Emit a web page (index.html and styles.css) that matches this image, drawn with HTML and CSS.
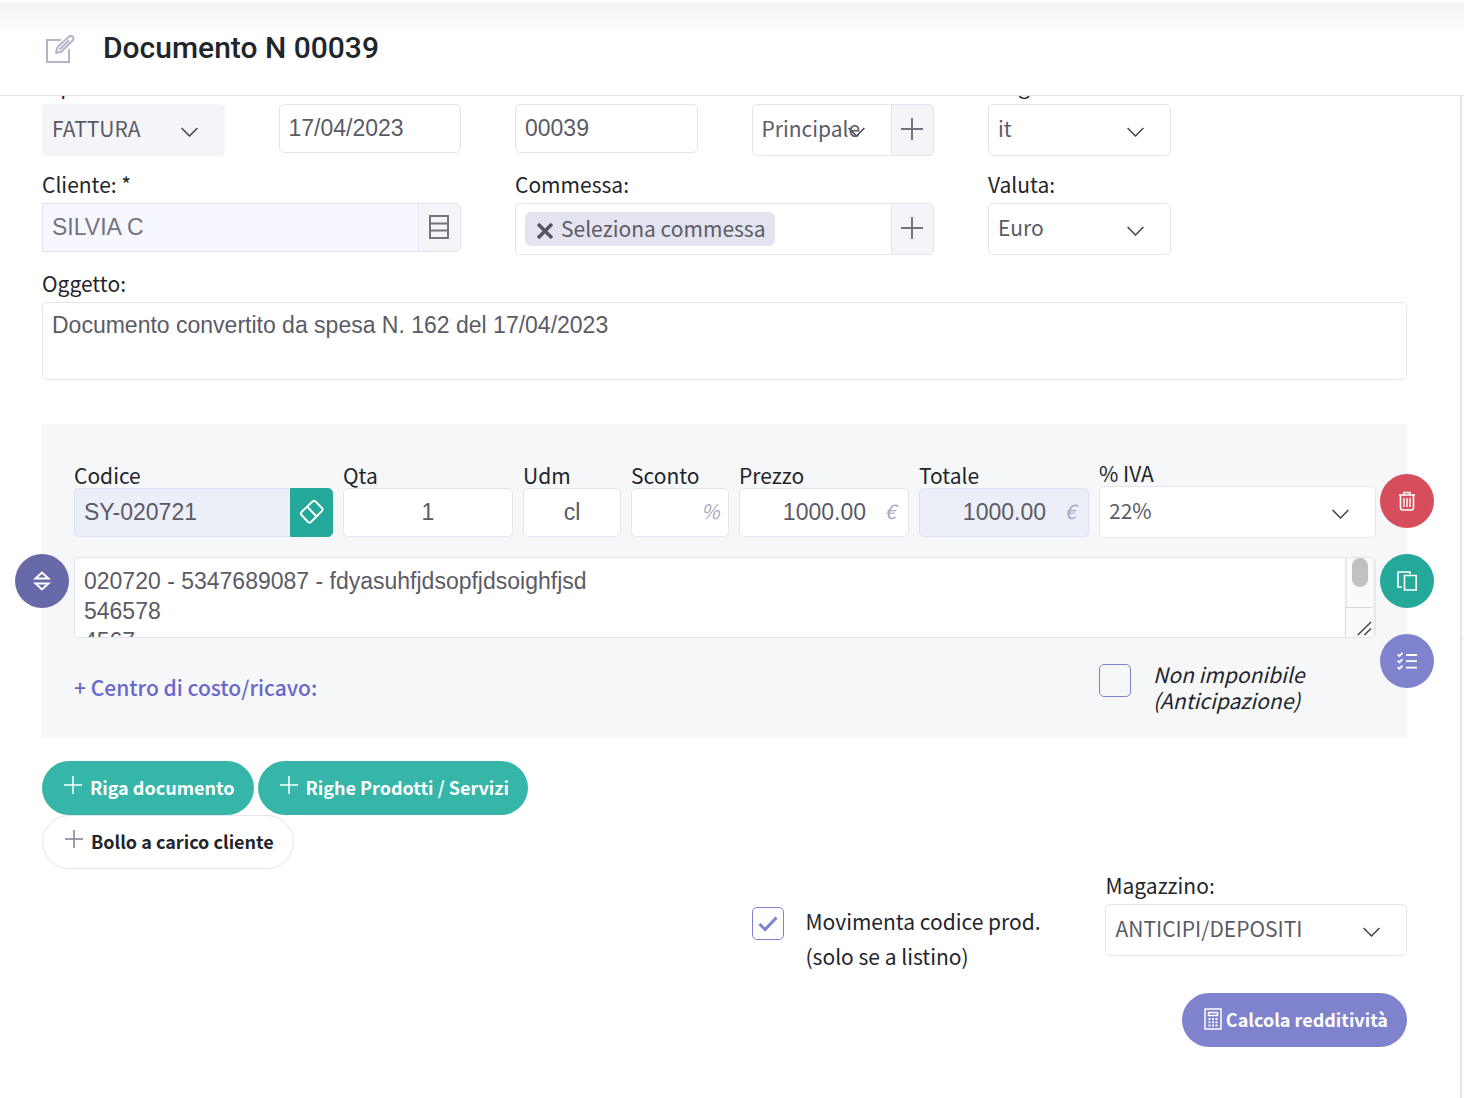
FILE: index.html
```html
<!DOCTYPE html>
<html lang="it">
<head>
<meta charset="utf-8">
<meta name="viewport" content="width=device-width, initial-scale=1">
<title>Documento N 00039</title>
<link rel="stylesheet" href="styles.css">
</head>
<body>
<header class="page-header">
  <svg class="page-header-icon" width="30" height="30" viewBox="0 0 30 30" fill="none" stroke="#b4b4cb" stroke-width="2" aria-hidden="true"><path d="M16 5H2v22h22V14"/><path d="M11 18l1.500-6L24 1.800a2.600 2.600 0 0 1 3.700 3.700L16.500 16.500zM24 5.500L14.500 14.500" stroke-linejoin="round"/></svg>
  <h1 class="page-title">Documento N 00039</h1>
</header>
<div class="page-body">
<main class="content">
  <form class="document-form">
    <div class="field">
      <label class="label" for="tipo">Tipo:</label>
      <select class="control select select-muted" id="tipo"><option>FATTURA</option></select>
    </div>
    <div class="field">
      <label class="label" for="data">Data:</label>
      <input class="control" id="data" type="text" value="17/04/2023">
    </div>
    <div class="field">
      <label class="label" for="numero">Numero:</label>
      <input class="control" id="numero" type="text" value="00039">
    </div>
    <div class="field">
      <label class="label" for="sezionale">Sezionale:</label>
      <div class="group">
        <select class="control select" id="sezionale"><option>Principale</option></select>
        <button class="addon" type="button" aria-label="Aggiungi sezionale"><svg width="22" height="22" viewBox="0 0 22 22" stroke="#74747f" stroke-width="2"><path d="M11 0v22M0 11h22"/></svg></button>
      </div>
    </div>
    <div class="field">
      <label class="label" for="lingua">Lingua:</label>
      <select class="control select" id="lingua"><option>it</option></select>
    </div>

    <div class="field field-wide row-start">
      <label class="label" for="cliente">Cliente: *</label>
      <div class="group">
        <input class="control control-client" id="cliente" type="text" value="SILVIA C" readonly>
        <button class="addon" type="button" aria-label="Elenco clienti"><svg width="20" height="24" viewBox="0 0 20 24" fill="none" stroke="#74747f" stroke-width="2"><path d="M1 1h18v22H1zM1 8.500h18M1 15.500h18"/></svg></button>
      </div>
    </div>
    <div class="field field-wide">
      <span class="label" id="commessa-label">Commessa:</span>
      <div class="group">
        <div class="control tags" role="group" aria-labelledby="commessa-label">
          <span class="tag"><button class="tag-remove" type="button" aria-label="Rimuovi"><svg width="16" height="16" viewBox="0 0 16 16" stroke="#55555f" stroke-width="3.500"><path d="M1 1l14 14M15 1L1 15"/></svg></button><span class="tag-text">Seleziona commessa</span></span>
        </div>
        <button class="addon" type="button" aria-label="Aggiungi commessa"><svg width="22" height="22" viewBox="0 0 22 22" stroke="#74747f" stroke-width="2"><path d="M11 0v22M0 11h22"/></svg></button>
      </div>
    </div>
    <div class="field">
      <label class="label" for="valuta">Valuta:</label>
      <select class="control select" id="valuta"><option>Euro</option></select>
    </div>

    <div class="field field-full">
      <label class="label" for="oggetto">Oggetto:</label>
      <textarea class="control subject" id="oggetto">Documento convertito da spesa N. 162 del 17/04/2023</textarea>
    </div>

    <section class="line-item">
      <div class="line-fields">
        <div class="field">
          <label class="line-label" for="codice">Codice</label>
          <div class="group">
            <input class="control control-tinted" id="codice" type="text" value="SY-020721" readonly>
            <button class="addon addon-green" type="button" aria-label="Cancella codice"><svg width="26" height="26" viewBox="0 0 26 26" fill="none" stroke="#fff" stroke-width="2" stroke-linejoin="round"><path d="M2.500 13L13.500 2.500q1.500-1.200 3 0l6.500 6.500q1.200 1.500 0 3L12 23q-1.500 1.200-3 0L2.500 16q-1.200-1.500 0-3zM9 8.500l8.500 9"/></svg></button>
          </div>
        </div>
        <div class="field">
          <label class="line-label" for="qta">Qta</label>
          <input class="control centered" id="qta" type="text" value="1">
        </div>
        <div class="field">
          <label class="line-label" for="udm">Udm</label>
          <input class="control centered" id="udm" type="text" value="cl">
        </div>
        <div class="field">
          <label class="line-label" for="sconto">Sconto</label>
          <div class="control amount"><input class="amount-input" id="sconto" type="text"><span class="unit">%</span></div>
        </div>
        <div class="field">
          <label class="line-label" for="prezzo">Prezzo</label>
          <div class="control amount"><input class="amount-input" id="prezzo" type="text" value="1000.00"><span class="unit">€</span></div>
        </div>
        <div class="field">
          <label class="line-label" for="totale">Totale</label>
          <div class="control control-tinted amount"><input class="amount-input" id="totale" type="text" value="1000.00" readonly><span class="unit">€</span></div>
        </div>
        <div class="field">
          <label class="line-label" for="iva">% IVA</label>
          <select class="control select" id="iva"><option>22%</option></select>
        </div>
      </div>
      <div class="control description">
        <textarea class="description-text" aria-label="Descrizione">020720 - 5347689087 - fdyasuhfjdsopfjdsoighfjsd
546578
4567

</textarea>
        <div class="rail" aria-hidden="true">
          <div class="rail-track"><div class="rail-thumb"></div></div>
          <svg class="rail-grip" width="20" height="18" viewBox="0 0 20 18" stroke="#444" stroke-width="1.500"><path d="M4 16L18 2M11 16l7-7"/></svg>
        </div>
      </div>
      <div class="line-footer">
        <a class="cost-link" href="#">+ Centro di costo/ricavo:</a>
        <div class="check-row">
          <input class="checkbox" id="non-imponibile" type="checkbox">
          <label class="exempt-label" for="non-imponibile">Non imponibile<br>(Anticipazione)</label>
        </div>
      </div>
      <button class="round round-move" type="button" aria-label="Sposta riga"><svg width="18" height="20" viewBox="0 0 18 20" fill="none" stroke="#fff" stroke-width="2"><path d="M2.500 7.500h13L9 1.500zM2.500 12.500h13L9 18.500z"/></svg></button>
      <div class="line-actions">
        <button class="round round-red" type="button" aria-label="Elimina riga"><svg width="18" height="20" viewBox="0 0 18 20" fill="none" stroke="#fff" stroke-width="1.600"><path d="M1 4h16M2.500 4v12.500q0 2.500 2.500 2.500h8q2.500 0 2.500-2.500V4M6 4V1.500h6V4"/><path d="M6 7v9M9 7v9M12 7v9" stroke-width="1.400"/></svg></button>
        <button class="round round-green" type="button" aria-label="Duplica riga"><svg width="22" height="20" viewBox="0 0 22 20" fill="none" stroke="#fff" stroke-width="1.600"><path d="M14 3V1H2v15h4M8.500 4.500h11.700v14.500H8.500z"/></svg></button>
        <button class="round round-violet" type="button" aria-label="Dettagli riga"><svg width="20" height="18" viewBox="0 0 20 18" fill="none" stroke="#fff" stroke-width="1.800"><path d="M9 3h11M9 9.200h11M9 15.700h11"/><path d="M.6 2.500L2.500 4 5.500.8M.6 8.800l1.900 1.500 3-3.200M.6 15.300l1.900 1.500 3-3.200"/></svg></button>
      </div>
    </section>

    <div class="add-buttons">
      <button class="pill pill-green" type="button"><svg class="pill-plus" width="18" height="18" viewBox="0 0 18 18" stroke="currentColor" stroke-width="1.500"><path d="M9 0v18M0 9h18"/></svg>Riga documento</button>
      <button class="pill pill-green" type="button"><svg class="pill-plus" width="18" height="18" viewBox="0 0 18 18" stroke="currentColor" stroke-width="1.500"><path d="M9 0v18M0 9h18"/></svg>Righe Prodotti / Servizi</button>
      <button class="pill pill-outline" type="button"><svg class="pill-plus" width="18" height="18" viewBox="0 0 18 18" stroke="#7f7f8e" stroke-width="1.500"><path d="M9 0v18M0 9h18"/></svg>Bollo a carico cliente</button>
    </div>

    <div class="stock">
      <div class="check-row stock-check">
        <input class="checkbox" id="movimenta" type="checkbox" checked>
        <label class="stock-label" for="movimenta">Movimenta codice prod.<br>(solo se a listino)</label>
      </div>
      <div class="field">
        <label class="label" for="magazzino">Magazzino:</label>
        <select class="control select" id="magazzino"><option>ANTICIPI/DEPOSITI</option></select>
      </div>
    </div>
    <button class="pill pill-violet" type="button"><svg width="18" height="22" viewBox="0 0 18 22" fill="none" stroke="currentColor" stroke-width="1.500"><path d="M1 1h16v20H1zM4.500 4.500h9v3h-9z"/><path d="M4.500 11h9M4.500 14.200h9M4.500 17.400h9" stroke-width="2" stroke-dasharray="2 1.500"/></svg>Calcola redditività</button>
  </form>
</main>
<aside class="side-panel"><div class="side-panel-head"></div></aside>
</div>
</body>
</html>
```
FILE: styles.css
```css
* { box-sizing: border-box; }

body {
  margin: 0;
  height: 100vh;
  display: flex;
  flex-direction: column;
  overflow: hidden;
  background: #fff;
  color: #1f262b;
  font: 21px/30px "Noto Sans CJK SC", "Noto Sans", sans-serif;
}

button, input, select, textarea { margin: 0; font: inherit; color: inherit; }
button { cursor: pointer; padding: 0; border: 0; }
svg { display: block; flex: none; }

/* Header */
.page-header {
  flex: none;
  height: 96px;
  display: flex;
  align-items: center;
  gap: 28px;
  padding: 2px 45px 0;
  border-top: 2px solid #fff;
  border-bottom: 1px solid #e4e4f1;
  background: linear-gradient(#f3f3f3, #fff 34px);
}
.page-title {
  margin: 0;
  font: 500 30px/40px Roboto, sans-serif;
  padding-bottom: 4px;
}

/* Scrolling body */
.page-body { flex: 1; min-height: 0; display: flex; }
.content {
  flex: 1;
  overflow: hidden;
  padding: 0 53px 0 42px;
  border-right: 2px solid #e4e4f1;
}
.side-panel { width: 2px; }
.side-panel-head { height: 543px; border-bottom: 1px solid #e4e4f1; }

.document-form {
  display: grid;
  grid-template-columns: repeat(6, 1fr);
  gap: 13px 54px;
  margin-top: -26px;
}
.field { min-width: 0; display: flex; flex-direction: column; }
.field-wide { grid-column: span 2; }
.row-start { grid-column: 1 / span 2; }
.field-full { grid-column: 1 / -1; }
.label { line-height: 30px; margin-bottom: 4px; }
.line-label { line-height: 26px; }

.control {
  width: 100%;
  min-width: 0;
  height: 49px;
  padding: 0 9px;
  border: 1px solid #e4e4f1;
  border-radius: 5px;
  background-color: #fff;
  color: #5b5b66;
  font-family: "Liberation Sans", Arial, sans-serif;
  font-size: 23px;
}
.select {
  height: 52px;
  padding-right: 20px;
  padding-bottom: 4px;
  appearance: none;
  font-family: "Noto Sans CJK SC", "Noto Sans", sans-serif;
  font-size: 21px;
  background-image: url("data:image/svg+xml,%3Csvg xmlns='http://www.w3.org/2000/svg' width='17' height='14' fill='none' stroke='%23444' stroke-width='1.500'%3E%3Cpath d='M.6 5l7.900 8 7.900-8'/%3E%3C/svg%3E");
  background-repeat: no-repeat;
  background-position: right 26px center;
}
.select-muted { background-color: #f4f5f9; border-color: #f4f5f9; }
.control-client {
  background-color: #f6f7ff;
  border-color: #e0e1f8;
  border-radius: 0;
  color: #74747f;
}
.control-tinted { background-color: #eceff8; border-color: #dbe0fa; }
.centered { text-align: center; }

.group { display: flex; }
.group > .control { flex: 1; border-top-right-radius: 0; border-bottom-right-radius: 0; border-right: 0; }
.addon {
  flex: none;
  width: 43px;
  display: flex;
  align-items: center;
  justify-content: center;
  padding: 0 2px 2px 0;
  border: 1px solid #e4e4f1;
  border-radius: 0 5px 5px 0;
  background: #f4f5f9;
}
.addon-green { padding: 0; border-color: #24a899; background: #24a899; }

.tags { height: 52px; display: flex; align-items: center; }
.tag {
  display: flex;
  align-items: center;
  gap: 8px;
  height: 34px;
  padding: 0 9px 0 12px;
  border-radius: 6px;
  background: #e4e4f0;
  font: 21px/30px "Noto Sans CJK SC", "Noto Sans", sans-serif;
  white-space: nowrap;
}
.tag-text { padding-bottom: 3px; }
.tag-remove { background: none; padding-top: 3px; }

.subject { height: 78px; padding: 7px 9px; line-height: 30px; resize: none; }

/* Document line */
.line-item {
  position: relative;
  grid-column: 1 / -1;
  margin-top: 31px;
  padding: 36px 31px 25px 32px;
  background: #f6f7f9;
}
.line-fields {
  display: grid;
  grid-template-columns: 259fr 170fr 98fr 98fr 170fr 170fr 277fr;
  align-items: center;
  gap: 10px;
}
.amount { display: flex; align-items: center; }
.amount-input {
  flex: 1;
  width: 0;
  min-width: 0;
  padding: 0 15px 0 0;
  border: 0;
  background: none;
  text-align: right;
}
.unit {
  width: 18px;
  padding-bottom: 3px;
  text-align: center;
  color: #a9a9c4;
  font: italic 20px/30px "Noto Sans CJK SC", "Noto Sans", sans-serif;
}

.description {
  display: flex;
  height: 81px;
  margin-top: 19px;
  padding: 0;
  overflow: hidden;
}
.description-text {
  flex: 1;
  padding: 8px 9px;
  border: 0;
  background: none;
  line-height: 30px;
  resize: none;
  scrollbar-width: none;
}
.rail {
  width: 30px;
  display: flex;
  flex-direction: column;
  background: #fafafa;
  border-right: 2px solid #ededed;
}
.rail-track { flex: 1; border-left: 2px solid #e8e8e8; }
.rail-thumb {
  width: 16px;
  height: 29px;
  margin: 0 auto;
  border-radius: 8px;
  background: #c1c1c1;
}
.rail-grip {
  width: 100%;
  height: 30px;
  padding: 12px 0 0 8px;
  border-top: 1px solid #d9d9d9;
  border-left: 1px solid #d9d9d9;
}

.line-footer {
  display: grid;
  grid-template-columns: 1025fr 277fr;
  margin-top: 23px;
}
.cost-link {
  padding-top: 11px;
  color: #6868cb;
  font-weight: 500;
  text-decoration: none;
}
.check-row { display: flex; align-items: flex-start; gap: 22px; }
.checkbox {
  flex: none;
  width: 32px;
  height: 33px;
  margin-top: 3px;
  appearance: none;
  border: 1px solid #7f82cc;
  border-radius: 5px;
}
.checkbox:checked {
  background: url("data:image/svg+xml,%3Csvg xmlns='http://www.w3.org/2000/svg' width='20' height='16' fill='none' stroke='%237f82cc' stroke-width='3'%3E%3Cpath d='M1.500 8l5.500 5.500L18.500 1.500'/%3E%3C/svg%3E") no-repeat center;
}
.exempt-label { font-style: italic; line-height: 26px; }

.round {
  width: 54px;
  height: 54px;
  display: flex;
  align-items: center;
  justify-content: center;
  border-radius: 50%;
}
.round-move { position: absolute; left: -27px; top: 130px; background: #6869a9; }
.line-actions {
  position: absolute;
  right: -27px;
  top: 50px;
  display: grid;
  gap: 26px;
}
.round-red { background: #d64d5c; }
.round-green { background: #24a899; }
.round-violet { background: #7f82cc; }

/* Buttons below the line */
.add-buttons {
  grid-column: 1 / -1;
  max-width: 50%;
  display: flex;
  flex-wrap: wrap;
  gap: 0 4px;
  margin-top: 10px;
}
.pill {
  height: 54px;
  display: flex;
  align-items: center;
  gap: 8px;
  padding: 0 19px 2px 22px;
  border-radius: 27px;
  font-size: 18px;
  font-weight: 700;
  white-space: nowrap;
}
.pill-plus { margin-bottom: 4px; }
.pill-green { background: #35b6a8; color: #fff; }
.pill-outline { border: 1px solid #e4e4f1; background: #fff; color: #22252b; }
.pill-violet {
  grid-column: 4 / -1;
  justify-self: end;
  gap: 4px;
  margin-top: 6px;
  background: #7f82cc;
  color: #fff;
}

.stock {
  grid-column: 4 / -1;
  display: grid;
  grid-template-columns: 54fr 46fr;
  margin-top: -12px;
}
.stock-check { padding-top: 34px; }
.stock-label { line-height: 35px; }
```
